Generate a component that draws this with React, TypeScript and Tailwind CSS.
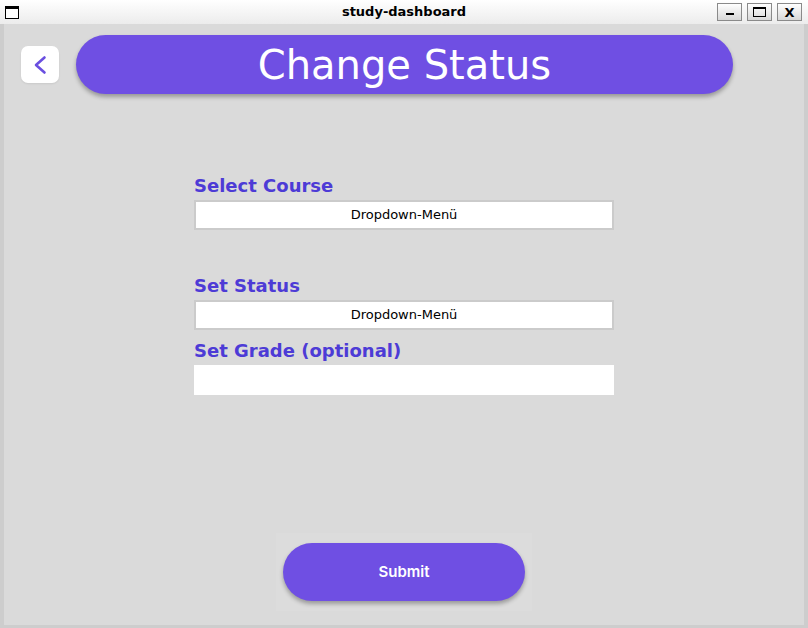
import React from "react";

function TitleBar() {
  return (
    <div className="h-[24px] grid grid-cols-[1fr_auto_1fr] items-center bg-gradient-to-b from-white to-[#ececec] font-['DejaVu_Sans',sans-serif]">
      {/* window icon */}
      <div className="ml-[5px] w-[14px] h-[13px] border border-black border-t-[3px] bg-white" />
      <div className="text-center text-[13px] font-bold text-black">study-dashboard</div>
      <div className="flex justify-end gap-[5px] mr-[6px]">
        <div className="w-[25px] h-[18px] border border-[#8a8a8a] bg-gradient-to-b from-white to-[#d8d8d8] flex items-end justify-center pb-[5px]">
          <div className="w-[8px] h-[2px] bg-black" />
        </div>
        <div className="w-[25px] h-[18px] border border-[#8a8a8a] bg-gradient-to-b from-white to-[#d8d8d8] flex items-center justify-center">
          <div className="w-[13px] h-[10px] border border-black border-t-2" />
        </div>
        <div className="w-[25px] h-[18px] border border-[#8a8a8a] bg-gradient-to-b from-white to-[#d8d8d8] flex items-center justify-center text-[13px] font-bold leading-none">
          X
        </div>
      </div>
    </div>
  );
}

function Dropdown() {
  return (
    <div className="h-[30px] w-[420px] border-2 border-[#cbcbcb] bg-white flex items-center justify-center text-[13px] text-black font-['DejaVu_Sans',sans-serif]">
      Dropdown-Menü
    </div>
  );
}

export default function App() {
  return (
    <div className="w-[808px] h-[628px] bg-[#cdcdcd] flex flex-col overflow-hidden">
      <TitleBar />
      <main className="flex-1 mx-[4px] mb-[3px] bg-[#dadada] flex flex-col">
        {/* Header */}
        <div className="flex items-center pt-[11px] pl-[17px]">
          <button className="w-[38px] h-[37px] rounded-[7px] bg-white flex items-center justify-center shadow-[0_1px_2px_rgba(0,0,0,0.08)]">
            <svg width="20" height="20" viewBox="0 0 20 20" fill="none">
              <path d="M14.5 2.5 L6 10 L14.5 17.5" stroke="#6a4fe0" strokeWidth="2.6" strokeLinecap="round" strokeLinejoin="round" />
            </svg>
          </button>
          <div className="ml-[17px] w-[657px] h-[59px] rounded-full bg-[#6f4fe3] shadow-[0_3px_4px_rgba(0,0,0,0.3)] flex items-center justify-center">
            <h1 className="text-white text-[40px] font-['DejaVu_Sans',sans-serif] leading-none">Change Status</h1>
          </div>
        </div>

        {/* Form */}
        <div className="pl-[190px] pt-[81px] flex flex-col font-['DejaVu_Sans',sans-serif]">
          <label className="text-[18px] font-bold text-[#4d3bd6] leading-[22px]">Select Course</label>
          <div className="mt-[3px]">
            <Dropdown />
          </div>
          <label className="mt-[45px] text-[18px] font-bold text-[#4d3bd6] leading-[22px]">Set Status</label>
          <div className="mt-[3px]">
            <Dropdown />
          </div>
          <label className="mt-[10px] text-[18px] font-bold text-[#4d3bd6] leading-[22px]">Set Grade (optional)</label>
          <input className="mt-[3px] w-[420px] h-[30px] bg-white outline-none px-2" />
        </div>

        {/* Submit */}
        <div className="mt-auto mb-[14px] flex justify-center">
          <div className="px-[7px] py-[10px] bg-[#dcdcdc]">
            <button className="w-[242px] h-[58px] rounded-full bg-[#6f4fe3] text-white text-[15px] font-semibold font-['Inter',sans-serif] shadow-[0_3px_4px_rgba(0,0,0,0.3)]">
              Submit
            </button>
          </div>
        </div>
      </main>
    </div>
  );
}
